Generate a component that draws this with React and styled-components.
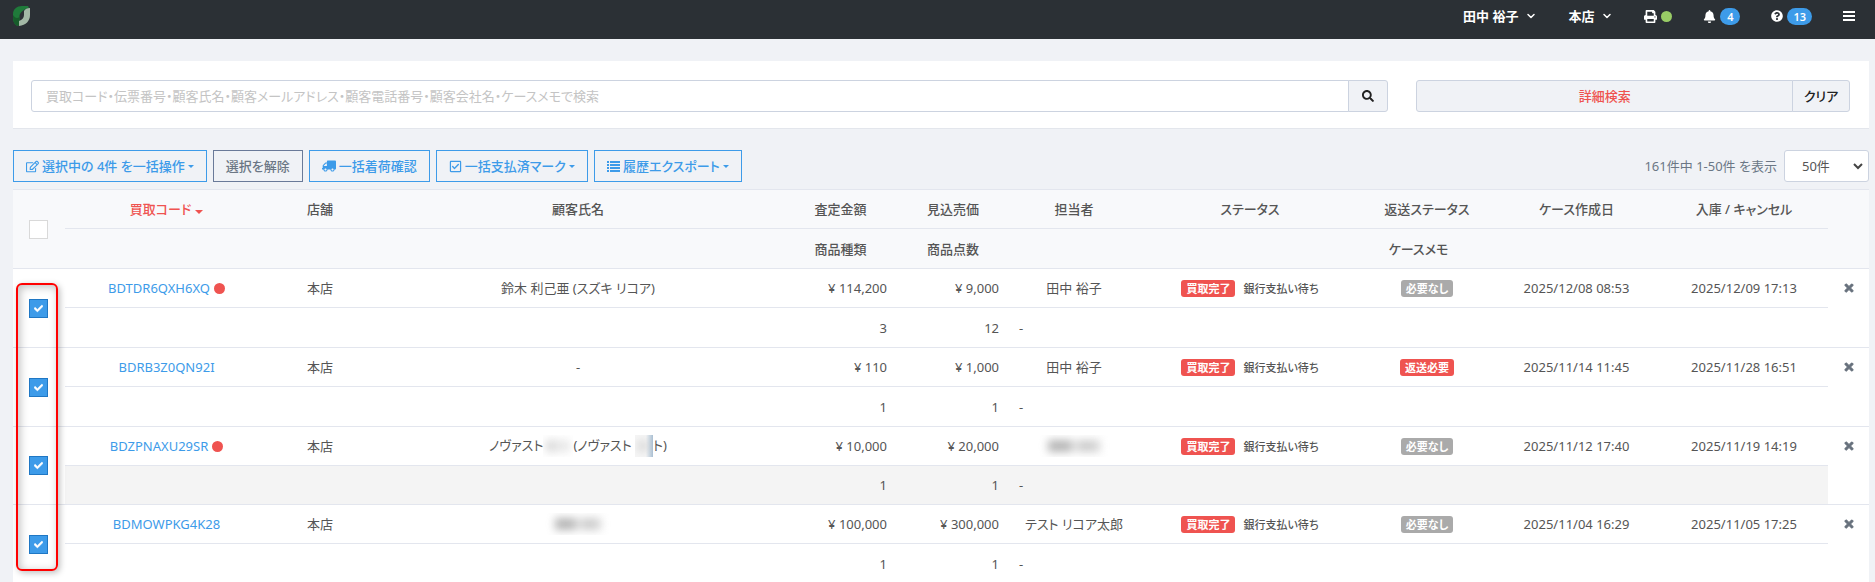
import React, { useState } from 'react'
import styled, { createGlobalStyle, css } from 'styled-components'
import {
    FaBell,
    FaCheck,
    FaPrint,
    FaQuestionCircle,
    FaRegCheckSquare,
    FaRegEdit,
    FaSearch,
    FaTimes,
    FaTruck,
} from 'react-icons/fa'
import { FiChevronDown } from 'react-icons/fi'

const cases = [
    {
        code: 'BDTDR6QXH6XQ',
        alert: true,
        shop: '本店',
        customer: '鈴木 利己亜 (スズキ リコア)',
        assessed: '¥ 114,200',
        expected: '¥ 9,000',
        kinds: 3,
        items: 12,
        staff: '田中 裕子',
        needsReturn: false,
        created: '2025/12/08 08:53',
        stored: '2025/12/09 17:13',
    },
    {
        code: 'BDRB3Z0QN92I',
        shop: '本店',
        customer: '-',
        assessed: '¥ 110',
        expected: '¥ 1,000',
        kinds: 1,
        items: 1,
        staff: '田中 裕子',
        needsReturn: true,
        created: '2025/11/14 11:45',
        stored: '2025/11/28 16:51',
    },
    {
        code: 'BDZPNAXU29SR',
        alert: true,
        shop: '本店',
        customer: (
            <>
                ノヴァスト<Masked $w={30} $faint />(ノヴァスト <Masked $w={18} $faint $edge />ト)
            </>
        ),
        assessed: '¥ 10,000',
        expected: '¥ 20,000',
        kinds: 1,
        items: 1,
        staff: <Masked $w={72} />,
        needsReturn: false,
        created: '2025/11/12 17:40',
        stored: '2025/11/19 14:19',
        hovered: true,
    },
    {
        code: 'BDMOWPKG4K28',
        shop: '本店',
        customer: <Masked $w={66} />,
        assessed: '¥ 100,000',
        expected: '¥ 300,000',
        kinds: 1,
        items: 1,
        staff: 'テスト リコア太郎',
        needsReturn: false,
        created: '2025/11/04 16:29',
        stored: '2025/11/05 17:25',
    },
]

function Masked({ $w, $faint, $edge }) {
    return <MaskClip $w={$w} $faint={$faint} $edge={$edge}><MaskBox $faint={$faint} /></MaskClip>
}

function Caret() {
    return (
        <CaretIcon viewBox="0 0 6 3">
            <path d="M0 0h6L3 3z" />
        </CaretIcon>
    )
}

function ListIcon() {
    return (
        <svg width="13" height="11" viewBox="0 0 13 11" fill="currentColor">
            {[0, 3, 6, 9].map((y) => (
                <path key={y} d={`M0 ${y}h2v2H0zM3 ${y}h10v2H3z`} />
            ))}
        </svg>
    )
}

function MenuIcon() {
    return (
        <svg width="12" height="10" viewBox="0 0 12 10" fill="currentColor">
            <path d="M0 0h12v2H0zM0 4h12v2H0zM0 8h12v2H0z" />
        </svg>
    )
}

function App() {
    const [selected, setSelected] = useState(cases.map((c) => c.code))

    const toggle = (code) => {
        if (selected.includes(code)) {
            setSelected(selected.filter((s) => s !== code))
        } else {
            setSelected([...selected, code])
        }
    }

    return (
        <>
            <GlobalStyle />
            <Header>
                <HomeLink href="#" aria-label="ホーム">
                    <svg width="18" height="20" viewBox="0 0 18 20">
                        <path d="M0 8C0 3 4 0 9 0h6l1 2C11 3 7 6 6.500 10v8L5 20C2 19 0 16 0 12z" fill="#1f7a3a" />
                        <path d="M0 9c0 6 1 10 5 11l1.500-2V11C4 13 2 12 0 9z" fill="#175c2b" />
                        <path d="M11 5c1-2 3-3 6-3v7c0 6-4 10-11 11v-5c3-1 5-3 5-6z" fill="#a3b8a6" />
                    </svg>
                </HomeLink>
                <Nav>
                    <NavButton $spaced>田中 裕子 <FiChevronDown size={12} strokeWidth={3} /></NavButton>
                    <NavButton $spaced>本店 <FiChevronDown size={12} strokeWidth={3} /></NavButton>
                    <NavButton aria-label="プリンター"><FaPrint size={13} /><Dot $color="#9c6" /></NavButton>
                    <NavButton aria-label="通知"><FaBell size={13} /><Count>4</Count></NavButton>
                    <NavButton aria-label="ヘルプ"><FaQuestionCircle size={12} /><Count>13</Count></NavButton>
                    <NavButton aria-label="メニュー"><MenuIcon /></NavButton>
                </Nav>
            </Header>

            <Main>
                <SearchPanel>
                    <SearchBox>
                        <SearchInput
                            aria-label="検索"
                            placeholder="買取コード・伝票番号・顧客氏名・顧客メールアドレス・顧客電話番号・顧客会社名・ケースメモで検索"
                        />
                        <SearchButton aria-label="検索する"><FaSearch size={12} /></SearchButton>
                    </SearchBox>
                    <DetailBox>
                        <DetailButton>詳細検索</DetailButton>
                        <ClearButton>クリア</ClearButton>
                    </DetailBox>
                </SearchPanel>

                <Toolbar>
                    <ToolButton>
                        <FaRegEdit size={13} />選択中の {selected.length}件 を一括操作<Caret />
                    </ToolButton>
                    <ToolButton $muted onClick={() => setSelected([])}>選択を解除</ToolButton>
                    <ToolButton><FlippedTruck size={14} />一括着荷確認</ToolButton>
                    <ToolButton><FaRegCheckSquare size={13} />一括支払済マーク<Caret /></ToolButton>
                    <ToolButton><ListIcon />履歴エクスポート<Caret /></ToolButton>
                    <Paging>
                        <label htmlFor="perPage">161件中 1-50件 を表示</label>
                        <SelectWrap>
                            <PageSelect id="perPage" defaultValue="50">
                                <option value="50">50件</option>
                                <option value="100">100件</option>
                            </PageSelect>
                            <svg width="10" height="7" viewBox="0 0 10 7">
                                <path d="M1 1l4 4 4-4" fill="none" stroke="#444" strokeWidth="2" />
                            </svg>
                        </SelectWrap>
                    </Paging>
                </Toolbar>

                <TableArea>
                    <Table>
                        <colgroup>
                            <Col $w={52} />
                            <Col $w={203} />
                            <Col $w={104} />
                            <Col />
                            <Col $w={113} />
                            <Col $w={112} />
                            <Col $w={130} />
                            <Col $w={222} />
                            <Col $w={132} />
                            <Col $w={167} />
                            <Col $w={168} />
                            <Col $w={41} />
                        </colgroup>
                        <thead>
                            <Row>
                                <Th rowSpan={2}>
                                    <Check
                                        type="checkbox"
                                        aria-label="すべて選択"
                                        checked={false}
                                        onChange={() => setSelected(cases.map((c) => c.code))}
                                    />
                                </Th>
                                <Th $sorted>買取コード<SortMark viewBox="0 0 8 4"><path d="M0 0h8L4 4z" /></SortMark></Th>
                                <Th>店舗</Th>
                                <Th>顧客氏名</Th>
                                <Th>査定金額</Th>
                                <Th>見込売価</Th>
                                <Th>担当者</Th>
                                <Th>ステータス</Th>
                                <Th>返送ステータス</Th>
                                <Th>ケース作成日</Th>
                                <Th>入庫 / キャンセル</Th>
                                <Th rowSpan={2} />
                            </Row>
                            <Row $sub>
                                <Th colSpan={3} />
                                <Th>商品種類</Th>
                                <Th>商品点数</Th>
                                <Th colSpan={5}>ケースメモ</Th>
                            </Row>
                        </thead>
                        <tbody>
                            {cases.map((c) => (
                                <React.Fragment key={c.code}>
                                    <Row>
                                        <Td rowSpan={2}>
                                            <CheckLabel>
                                                <Check
                                                    type="checkbox"
                                                    aria-label={c.code}
                                                    checked={selected.includes(c.code)}
                                                    onChange={() => toggle(c.code)}
                                                />
                                                <FaCheck size={9} />
                                            </CheckLabel>
                                        </Td>
                                        <Td>
                                            <CodeLink href="#">{c.code}</CodeLink>
                                            {c.alert && <Dot $color="#ef5350" />}
                                        </Td>
                                        <Td>{c.shop}</Td>
                                        <Td>{c.customer}</Td>
                                        <Td $align="right">{c.assessed}</Td>
                                        <Td $align="right">{c.expected}</Td>
                                        <Td>{c.staff}</Td>
                                        <Td>
                                            <Badge $color="#ef5350">買取完了</Badge>
                                            <StatusNote>銀行支払い待ち</StatusNote>
                                        </Td>
                                        <Td>
                                            {c.needsReturn
                                                ? <Badge $color="#ef5350">返送必要</Badge>
                                                : <Badge $color="#aaa">必要なし</Badge>}
                                        </Td>
                                        <Td>{c.created}</Td>
                                        <Td>{c.stored}</Td>
                                        <Td $top>
                                            <RemoveButton aria-label="削除"><FaTimes size={12} /></RemoveButton>
                                        </Td>
                                    </Row>
                                    <Row $sub $hovered={c.hovered}>
                                        <Td colSpan={3} />
                                        <Td $align="right">{c.kinds}</Td>
                                        <Td $align="right">{c.items}</Td>
                                        <Td colSpan={5} $align="left">-</Td>
                                    </Row>
                                </React.Fragment>
                            ))}
                        </tbody>
                    </Table>
                    <Highlight />
                </TableArea>
            </Main>
        </>
    )
}

export default App

const GlobalStyle = createGlobalStyle`
    * {
        box-sizing: border-box;
    }
    body {
        margin: 0;
        background: #f0f2f6;
        color: #555;
        overflow: hidden;
    }
    body, button, input, select {
        font-family: "Noto Sans", "Noto Sans CJK JP", sans-serif;
        font-size: 13px;
        line-height: 20px;
        font-feature-settings: "palt";
    }
    button {
        cursor: pointer;
    }
`

const Header = styled.header`
    display: flex;
    justify-content: space-between;
    align-items: flex-start;
    height: 39px;
    padding: 0 20px 0 13px;
    background: #2b3035;
`

const HomeLink = styled.a`
    padding-top: 6px;
    svg {
        display: block;
    }
`

const Nav = styled.nav`
    display: flex;
    gap: 31px;
`

const NavButton = styled.button`
    display: flex;
    align-items: center;
    gap: ${(p) => (p.$spaced ? 7 : 4)}px;
    height: 32px;
    padding: 0;
    border: 0;
    background: none;
    color: #fff;
    font-weight: 600;
`

const Count = styled.span`
    min-width: 20px;
    padding: 0 6px;
    border-radius: 9px;
    background: #3d9be9;
    font-size: 11px;
    line-height: 17px;
`

const Dot = styled.span`
    display: inline-block;
    width: 11px;
    height: 11px;
    margin-left: 4px;
    border-radius: 50%;
    background: ${(p) => p.$color};
    vertical-align: -1px;
    ${NavButton} & {
        margin-left: 0;
    }
`

const Main = styled.main`
    padding: 22px 6px 0 13px;
`

const SearchPanel = styled.section`
    display: flex;
    gap: 28px;
    padding: 19px 19px 16px 18px;
    background: #fff;
    border-bottom: 1px solid #e3e6ec;
`

const SearchBox = styled.div`
    display: flex;
    flex: 3.13;
`

const field = css`
    height: 32px;
    border: 1px solid #ccd3e0;
    background: #f0f2f6;
`

const SearchInput = styled.input`
    ${field}
    flex: 1;
    min-width: 0;
    padding: 0 14px;
    border-radius: 3px 0 0 3px;
    background: #fff;
    &::placeholder {
        color: #c4c4c4;
    }
`

const SearchButton = styled.button`
    ${field}
    width: 40px;
    margin-left: -1px;
    border-radius: 0 3px 3px 0;
    color: #222;
    svg {
        display: block;
        margin: auto;
    }
`

const DetailBox = styled.div`
    display: flex;
    flex: 1;
`

const DetailButton = styled.button`
    ${field}
    flex: 1;
    border-radius: 3px 0 0 3px;
    color: #ef5350;
    font-weight: 500;
`

const ClearButton = styled.button`
    ${field}
    width: 58px;
    margin-left: -1px;
    padding: 0;
    border-radius: 0 3px 3px 0;
    color: #222;
    font-weight: 500;
`

const Toolbar = styled.div`
    display: flex;
    align-items: center;
    gap: 6px;
    padding: 21px 0 7px;
`

const ToolButton = styled.button`
    display: flex;
    align-items: center;
    gap: 3px;
    height: 32px;
    padding: 0 12px;
    border: 1px solid ${(p) => (p.$muted ? '#6a7a99' : '#3d9be9')};
    background: none;
    color: ${(p) => (p.$muted ? '#6b7785' : '#3d9be9')};
    font-weight: 500;
    white-space: nowrap;
`

const CaretIcon = styled.svg`
    width: 6px;
    height: 3px;
    fill: currentColor;
`

const FlippedTruck = styled(FaTruck)`
    transform: scaleX(-1);
`

const Paging = styled.div`
    display: flex;
    align-items: center;
    gap: 7px;
    margin-left: auto;
    color: #6b7785;
`

const SelectWrap = styled.span`
    position: relative;
    svg {
        position: absolute;
        right: 6px;
        top: 13px;
        pointer-events: none;
    }
`

const PageSelect = styled.select`
    ${field}
    display: block;
    width: 85px;
    padding: 0 17px;
    border-radius: 3px;
    background: #fff;
    color: #555;
    appearance: none;
`

const TableArea = styled.div`
    position: relative;
`

const Table = styled.table`
    width: 100%;
    table-layout: fixed;
    border-collapse: separate;
    border-spacing: 0;
    background: #fff;
`

const Col = styled.col`
    width: ${(p) => (p.$w ? `${p.$w}px` : 'auto')};
`

const Row = styled.tr`
    height: ${(p) => (p.$sub && !p.$hovered ? 40 : 39)}px;
    background: ${(p) => (p.$hovered ? '#f4f4f4' : 'transparent')};
`

const cell = css`
    padding: 0 10px;
    border-top: 1px solid #e3e6ee;
    white-space: nowrap;
`

const Th = styled.th`
    ${cell}
    background: #f8f9fb;
    color: ${(p) => (p.$sorted ? '#ef5350' : '#555')};
    font-weight: 500;
`

const Td = styled.td`
    ${cell}
    text-align: ${(p) => p.$align || 'center'};
    vertical-align: ${(p) => (p.$top ? 'top' : 'middle')};
`

const SortMark = styled.svg`
    width: 8px;
    height: 4px;
    margin-left: 4px;
    fill: #ef5350;
`

const CheckLabel = styled.label`
    position: relative;
    display: block;
    svg {
        position: absolute;
        top: 5px;
        left: 11px;
        color: #fff;
        stroke: #fff;
        stroke-width: 30px;
        pointer-events: none;
    }
`

const Check = styled.input`
    appearance: none;
    display: block;
    width: 19px;
    height: 19px;
    margin: 0 6px;
    border: 1px solid #d9d9d9;
    background: #fff;
    &:checked {
        border-color: #1f77c4;
        background: #3d9be9;
    }
`

const CodeLink = styled.a`
    color: #3d9be9;
    text-decoration: none;
`

const Badge = styled.span`
    display: inline-block;
    padding: 0 5px;
    border-radius: 3px;
    background: ${(p) => p.$color};
    color: #fff;
    font-size: 11px;
    font-weight: 700;
    line-height: 17px;
`

const StatusNote = styled.span`
    margin-left: 8px;
    font-size: 11px;
    font-weight: 500;
`

const MaskClip = styled.span`
    display: inline-block;
    width: ${(p) => p.$w}px;
    height: 22px;
    padding: 5px ${(p) => (p.$faint ? 3 : 10)}px;
    overflow: hidden;
    vertical-align: middle;
    background: ${(p) => (p.$edge ? 'linear-gradient(90deg, #f6f6f6 60%, #a9bfd3)' : 'none')};
`

const MaskBox = styled.span`
    display: block;
    height: 12px;
    background: linear-gradient(90deg, #a4a4a4 40%, #e8e8e8 52%, #bbb 65%, #ccc);
    filter: blur(4px);
    opacity: ${(p) => (p.$faint ? 0.4 : 0.8)};
`

const RemoveButton = styled.button`
    display: block;
    margin: 8px auto 0;
    padding: 0;
    border: 0;
    background: none;
    color: #66707c;
    svg {
        display: block;
        margin: 5px 0;
        stroke: currentColor;
        stroke-width: 40px;
    }
`

// red frame laid over the column of ticked boxes
const Highlight = styled.div`
    position: absolute;
    top: 94px;
    left: 3px;
    width: 42px;
    height: 288px;
    border: 2px solid #f00;
    border-radius: 6px;
    box-shadow: 2px 2px 6px rgba(0, 0, 0, 0.25), inset 2px 2px 8px rgba(0, 0, 0, 0.25);
    pointer-events: none;
`
